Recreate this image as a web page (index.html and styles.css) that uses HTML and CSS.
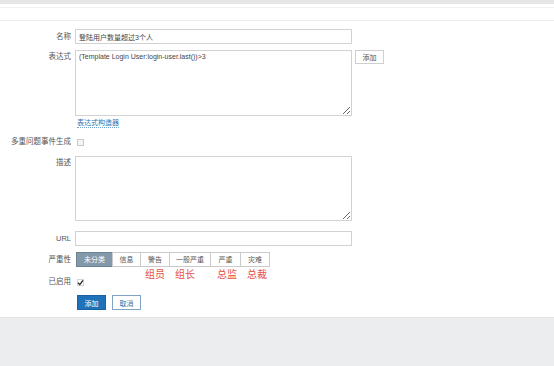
FILE: index.html
```html
<!DOCTYPE html>
<html lang="zh-CN">
<head>
    <meta charset="UTF-8">
    <meta name="viewport" content="width=device-width, initial-scale=1.0">
    <title>触发器</title>
    <link rel="stylesheet" href="styles.css">
</head>
<body>
    <div class="topbar"></div>
    <div class="tabs"></div>

    <form class="form">
        <div class="row row-name">
            <label class="lbl">名称</label>
            <div class="field">
                <input class="text" type="text" value="登陆用户数量超过3个人">
            </div>
        </div>

        <div class="row row-expr">
            <label class="lbl lbl-top">表达式</label>
            <div class="field field-expr">
                <textarea class="area">(Template Login User:login-user.last())>3</textarea>
                <button type="button" class="btn-small">添加</button>
            </div>
        </div>

        <div class="row row-link">
            <span></span>
            <div class="field">
                <a class="link">表达式构造器</a>
            </div>
        </div>

        <div class="row row-multi">
            <label class="lbl">多重问题事件生成</label>
            <div class="field">
                <span class="check"></span>
            </div>
        </div>

        <div class="row row-desc">
            <label class="lbl lbl-top">描述</label>
            <div class="field">
                <textarea class="area area-desc"></textarea>
            </div>
        </div>

        <div class="row row-url">
            <label class="lbl">URL</label>
            <div class="field">
                <input class="text" type="text">
            </div>
        </div>

        <div class="row row-sev">
            <label class="lbl">严重性</label>
            <div class="field field-sev">
                <div class="seg">
                    <span class="seg-btn w37 active">未分类</span>
                    <span class="seg-btn w29">信息</span>
                    <span class="seg-btn w30">警告</span>
                    <span class="seg-btn w42">一般严重</span>
                    <span class="seg-btn w31">严重</span>
                    <span class="seg-btn w30">灾难</span>
                </div>
                <!-- 手写的标注 -->
                <span class="note note-1">组员</span>
                <span class="note note-2">组长</span>
                <span class="note note-3">总监</span>
                <span class="note note-4">总裁</span>
            </div>
        </div>

        <div class="row row-enabled">
            <label class="lbl">已启用</label>
            <div class="field">
                <span class="check checked">
                    <svg width="7" height="7" viewBox="0 0 7 7"><path d="M1 3.8 L2.8 5.6 L6 1.4" fill="none" stroke="#222" stroke-width="1.3"/></svg>
                </span>
            </div>
        </div>

        <div class="row row-actions">
            <span></span>
            <div class="field actions">
                <button type="button" class="btn btn-primary">添加</button>
                <button type="button" class="btn btn-cancel">取消</button>
            </div>
        </div>
    </form>

    <div class="footer"></div>
</body>
</html>
```

FILE: styles.css
```css
body {
    margin: 0;
    font-family: "Liberation Sans", "Noto Sans CJK SC", sans-serif;
    font-size: 7.5px;
    color: #555;
    background: #fff;
}

.topbar {
    height: 4px;
    background: #e6e6e6;
}

.tabs {
    height: 12px;
    margin-top: 3px;
    border-top: 1px solid #f1f1f1;
    border-bottom: 1px solid #ebebeb;
}

.form {
    padding: 8px 0 7px;
}

.row {
    display: grid;
    grid-template-columns: 71px auto;
    column-gap: 4px;
    align-items: center;
}

.lbl {
    text-align: right;
    line-height: 10px;
}

.lbl-top {
    align-self: start;
    padding-top: 2px;
}

.row-expr { margin-top: 6px; }
.row-link { margin-top: 2px; }
.row-multi { margin-top: 9px; }
.row-desc { margin-top: 9px; }
.row-url { margin-top: 10px; }
.row-sev { margin-top: 6px; }
.row-enabled { margin-top: 10px; }
.row-actions { margin-top: 8px; }

.text {
    box-sizing: border-box;
    width: 277px;
    height: 15px;
    margin: 0;
    padding: 0 3px;
    border: 1px solid #d2d2d2;
    font-family: "Liberation Sans", "Noto Sans CJK SC", sans-serif;
    font-size: 7px;
    color: #444;
    outline: none;
}

.area {
    box-sizing: border-box;
    display: block;
    width: 277px;
    height: 66px;
    margin: 0;
    padding: 2px 3px;
    border: 1px solid #d2d2d2;
    font-family: "Liberation Sans", "Noto Sans CJK SC", sans-serif;
    font-size: 7px;
    color: #444;
    outline: none;
}

.area-desc {
    height: 65px;
}

.field-expr {
    display: flex;
    align-items: flex-start;
    gap: 3px;
}

.btn-small {
    box-sizing: border-box;
    height: 14px;
    width: 29px;
    margin: 0;
    padding: 0;
    border: 1px solid #cfcfcf;
    background: #fff;
    font-family: "Noto Sans CJK SC", sans-serif;
    font-size: 7px;
    color: #555;
}

.link {
    display: inline-block;
    margin-left: 2px;
    line-height: 9px;
    font-size: 7px;
    color: #2a76b8;
    border-bottom: 1px dotted #6ea3d1;
}

.check {
    display: block;
    box-sizing: border-box;
    width: 7px;
    height: 7px;
    margin-left: 2px;
    border: 1px solid #c9c9c9;
    background: #f5f5f5;
    position: relative;
}

.check.checked {
    border-color: #d6d6d6;
    background: #fff;
}

.check svg {
    position: absolute;
    left: -1px;
    top: -1px;
}

.field-sev {
    position: relative;
}

.seg {
    display: flex;
    margin-left: 1px;
}

.seg-btn {
    box-sizing: border-box;
    height: 15px;
    line-height: 13px;
    text-align: center;
    border: 1px solid #cacaca;
    background: #fff;
    font-size: 7px;
    color: #555;
}

.seg-btn + .seg-btn {
    margin-left: -1px;
}

.seg-btn.active {
    background: #8398a9;
    border-color: #6b8295;
    color: #fff;
}

.w29 { width: 29px; }
.w30 { width: 30px; }
.w31 { width: 31px; }
.w37 { width: 37px; }
.w42 { width: 42px; }

.note {
    position: absolute;
    top: 16px;
    font-family: "Noto Sans CJK SC", sans-serif;
    font-size: 10px;
    line-height: 11px;
    color: #e65048;
}

.note-1 { left: 70px; }
.note-2 { left: 100px; }
.note-3 { left: 142px; }
.note-4 { left: 172px; }

.actions {
    display: flex;
    gap: 6px;
    margin-left: 2px;
}

.btn {
    box-sizing: border-box;
    width: 29px;
    height: 15px;
    margin: 0;
    padding: 0;
    font-family: "Noto Sans CJK SC", sans-serif;
    font-size: 7px;
}

.btn-primary {
    background: #1f71b8;
    border: 1px solid #1a62a2;
    color: #fff;
}

.btn-cancel {
    background: #fff;
    border: 1px solid #7fa3c4;
    color: #3d6d98;
}

.footer {
    height: 50px;
    background: #ebedef;
    border-top: 1px solid #e1e3e5;
}
```
